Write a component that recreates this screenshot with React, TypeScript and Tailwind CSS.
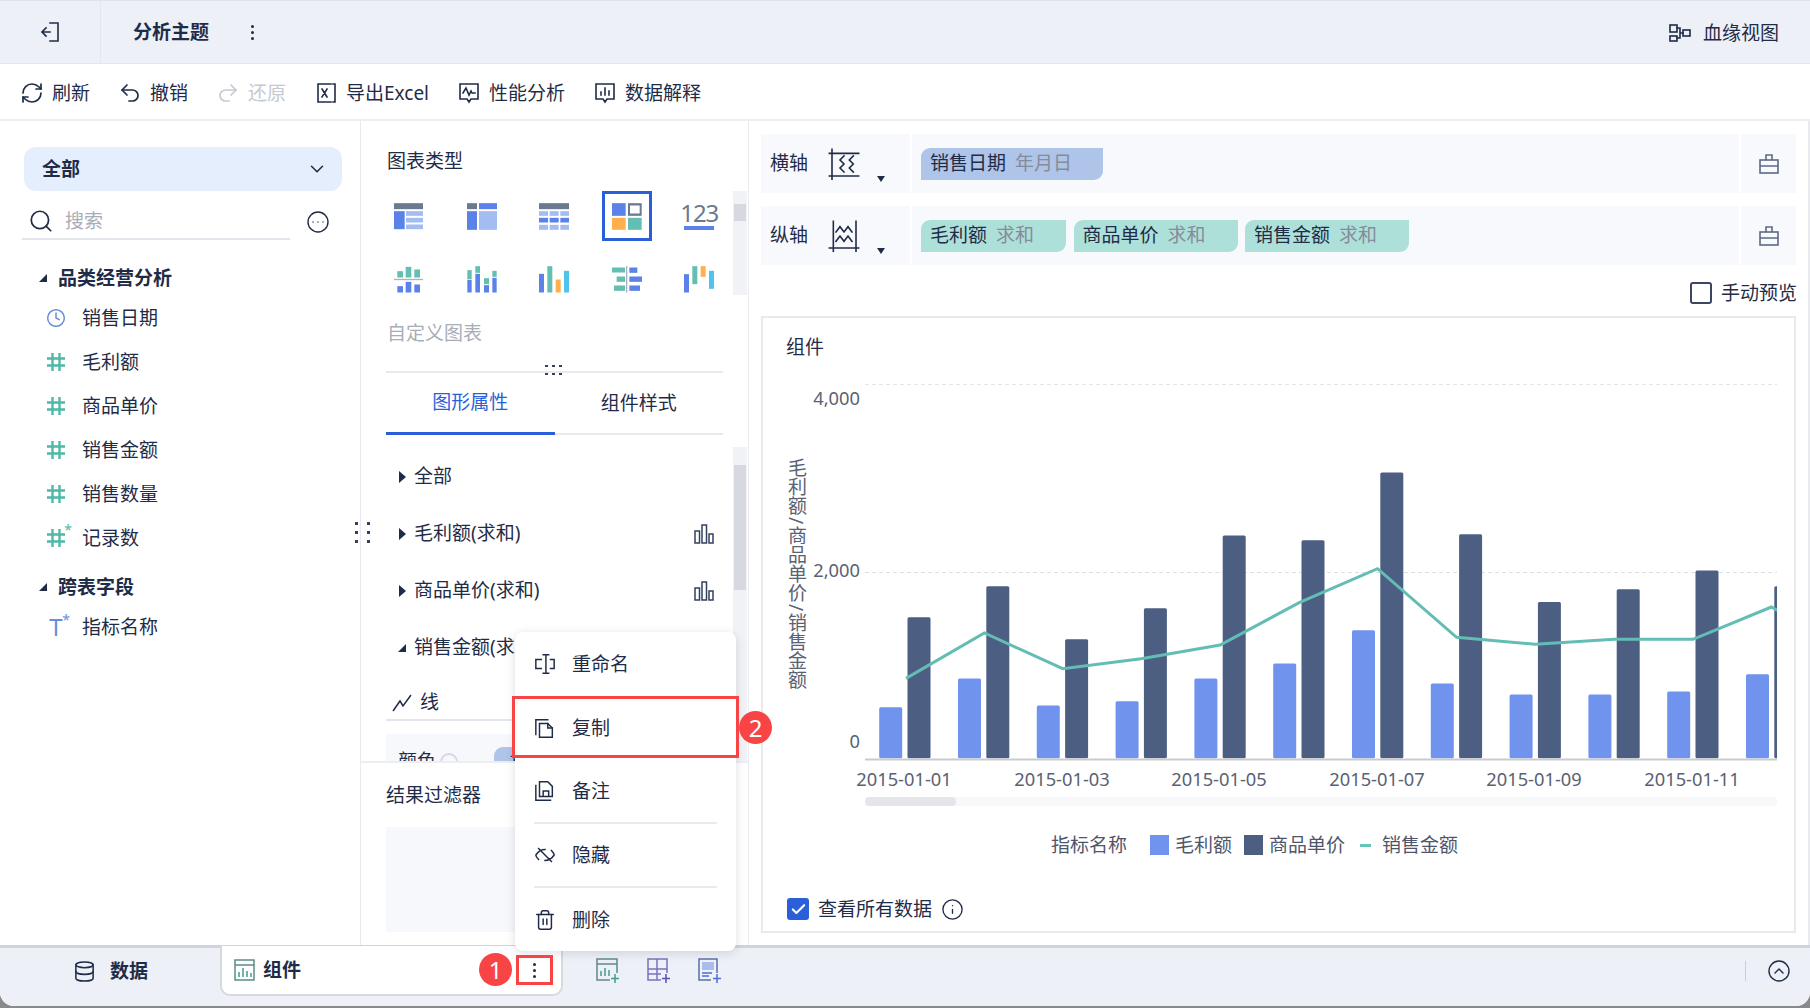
import { ChevronDown, CircleChevronUp, CircleEllipsis, Clock, Database, Info, Redo2, RefreshCw, Search, Trash2, Undo2, Check } from 'lucide-react'
import type { ReactNode } from 'react'

const INK = '#1f2c47'

type Bar = [number, number, number, number, string]

const G = '#6b7a90'
const B = '#5a82e8'
const L = '#a3bdf2'
const T = '#63bfb1'
const O = '#ffb04d'
const S = '#4fc3ee'

// coordinates are read from the reference at 3x
const chartIcons: { w: number; h: number; x: number; y: number; bars: Bar[] }[] = [
  {
    w: 30, h: 27, x: 45, y: 70,
    bars: [[45, 70, 132, 88, G], [45, 94, 77, 148, B], [81, 94, 132, 108, L], [81, 114, 132, 128, L], [81, 134, 132, 148, L]],
  },
  {
    w: 30, h: 27, x: 261, y: 68,
    bars: [[261, 68, 291, 86, G], [297, 68, 351, 86, B], [261, 92, 291, 148, B], [297, 92, 351, 148, L]],
  },
  {
    w: 30, h: 27, x: 477, y: 68,
    bars: [
      [477, 68, 567, 86, G],
      [477, 92, 504, 106, L], [509, 92, 536, 106, L], [541, 92, 567, 106, L],
      [477, 112, 504, 126, B], [509, 112, 536, 126, B], [541, 112, 567, 126, B],
      [477, 133, 504, 148, L], [509, 133, 536, 148, L], [541, 133, 567, 148, L],
    ],
  },
  {
    w: 30, h: 27, x: 697, y: 68,
    bars: [[697, 68, 738, 106, B], [745, 68, 786, 106, G], [751, 75, 780, 99, '#ffffff'], [697, 112, 738, 148, O], [745, 112, 786, 148, T]],
  },
]

const chartIconsRow2: { w: number; h: number; x: number; y: number; bars: Bar[] }[] = [
  {
    w: 30, h: 27, x: 45, y: 258,
    bars: [
      [55, 273, 72, 292, T], [80, 260, 97, 292, T], [106, 268, 123, 292, T], [45, 296, 132, 300, '#aab3c2'],
      [55, 318, 72, 337, B], [80, 305, 97, 337, B], [106, 313, 123, 337, B],
    ],
  },
  {
    w: 30, h: 27, x: 261, y: 258,
    bars: [
      [262, 270, 275, 297, T], [262, 299, 275, 337, B], [286, 258, 300, 278, T], [286, 281, 300, 337, B],
      [312, 294, 327, 312, T], [312, 315, 327, 337, B], [337, 272, 350, 290, T], [337, 293, 350, 337, B],
    ],
  },
  {
    w: 30, h: 27, x: 477, y: 258,
    bars: [[477, 281, 492, 337, B], [502, 258, 517, 337, T], [527, 298, 542, 337, O], [552, 272, 567, 337, S]],
  },
  {
    w: 30, h: 27, x: 696, y: 258,
    bars: [
      [738, 258, 742, 337, '#aab3c2'], [696, 262, 735, 277, T], [710, 289, 735, 305, T], [702, 316, 735, 332, T],
      [748, 262, 772, 278, B], [748, 289, 787, 305, B], [748, 316, 780, 332, B],
    ],
  },
  {
    w: 30, h: 27, x: 912, y: 258,
    bars: [[912, 282, 927, 337, B], [937, 258, 952, 312, T], [962, 258, 977, 290, O], [987, 272, 1002, 326, S]],
  },
]

function BarsIcon({ icon }: { icon: { w: number; h: number; x: number; y: number; bars: Bar[] } }) {
  return (
    <svg width={icon.w} height={icon.h} viewBox={`${icon.x} ${icon.y} 90 80`}>
      {icon.bars.map((b, i) => (
        <rect key={i} x={b[0]} y={b[1]} width={b[2] - b[0]} height={b[3] - b[1]} fill={b[4]} />
      ))}
    </svg>
  )
}

function Outline({ size = 22, children, color = INK, sw = 1.6 }: { size?: number; children: ReactNode; color?: string; sw?: number }) {
  return (
    <svg width={size} height={size} viewBox="0 0 24 24" fill="none" stroke={color} strokeWidth={sw} strokeLinecap="square">
      {children}
    </svg>
  )
}

function Caret({ dir }: { dir: 'right' | 'corner' }) {
  return (
    <svg width="9" height="12" viewBox="0 0 9 12" className="shrink-0" fill={INK}>
      {dir === 'right' ? <polygon points="1,0 8,6 1,12" /> : <polygon points="8,2 8,10 0,10" />}
    </svg>
  )
}

function Tool({ icon, label, muted }: { icon: ReactNode; label: string; muted?: boolean }) {
  return (
    <div className={`flex items-center gap-[8px] ${muted ? 'text-[#c5c9d1]' : ''}`}>
      {icon}
      <span>{label}</span>
    </div>
  )
}

const fields = [
  { label: '毛利额', star: false },
  { label: '商品单价', star: false },
  { label: '销售金额', star: false },
  { label: '销售数量', star: false },
  { label: '记录数', star: true },
]

function HashMark() {
  return (
    <svg width="20" height="20" viewBox="0 0 20 20" fill="none" stroke="#4fb8a8" strokeWidth="2.4">
      <path d="M6.500 1v18M13.500 1v18M1 6.500h18M1 13.500h18" />
    </svg>
  )
}

function FieldRow({ icon, label }: { icon: ReactNode; label: string }) {
  return (
    <div className="flex h-[44px] items-center">
      <div className="flex w-[82px] justify-end pr-[16px]">{icon}</div>
      <span>{label}</span>
    </div>
  )
}

function MiniBars() {
  return (
    <svg width="20" height="20" viewBox="0 0 20 20" fill="none" stroke="#33415f" strokeWidth="1.5">
      <rect x="1" y="7" width="4.5" height="12" />
      <rect x="8" y="1" width="4.5" height="18" />
      <rect x="15" y="10" width="4" height="9" />
    </svg>
  )
}

function PropRow({ open, label, bars }: { open?: boolean; label: string; bars?: boolean }) {
  return (
    <div className="flex h-[57px] items-center pl-[37px] pr-[34px]">
      <Caret dir={open ? 'corner' : 'right'} />
      <span className="ml-[7px] whitespace-nowrap">{label}</span>
      {bars && <div className="ml-auto"><MiniBars /></div>}
    </div>
  )
}

function Chip({ tone, name, sub, w }: { tone: string; name: string; sub: string; w: string }) {
  return (
    <div className={`flex h-[32px] items-center gap-[9px] rounded-tl-[9px] rounded-br-[9px] pl-[9px] ${tone} ${w}`}>
      <span>{name}</span>
      <span className="text-[#858b98]">{sub}</span>
    </div>
  )
}

function SuitcaseIcon() {
  return (
    <svg width="20" height="20" viewBox="0 0 20 20" fill="none" stroke="#5d6a82" strokeWidth="1.6">
      <rect x="1" y="6" width="18" height="13" />
      <path d="M7 6V1h6v5M1 12h18" />
    </svg>
  )
}

function AxisRow({ label, icon, children }: { label: string; icon: ReactNode; children: ReactNode }) {
  return (
    <div className="flex h-[59px] items-center bg-[#f8f9fd]">
      <div className="flex h-full w-[151px] items-center border-r-2 border-white pl-[9px]">
        <span className="w-[58px]">{label}</span>
        {icon}
        <svg width="8" height="8" viewBox="0 0 8 8" className="mt-[30px] ml-[17px]" fill={INK}><polygon points="0,1 8,1 4,7" /></svg>
      </div>
      <div className="flex flex-1 gap-[7.5px] pl-[9px]">{children}</div>
      <div className="flex h-full w-[57px] items-center justify-center border-l-2 border-white"><SuitcaseIcon /></div>
    </div>
  )
}

const light = [707, 678.3, 705.3, 701, 678.3, 663.3, 630, 683.3, 694.3, 694.3, 691.3, 674]
const dark = [617, 586, 639, 608, 535.3, 540, 472.3, 534, 601.7, 589, 570.3, 586]
const line: [number, number][] = [
  [218, 772], [335, 636], [452, 743], [569, 713], [687, 672], [805, 545], [922, 443], [1040, 649], [1158, 670], [1275, 655], [1393, 655], [1510, 558], [1519, 568],
]
const ticks = [
  ['2015-01-01', 904], ['2015-01-03', 1062], ['2015-01-05', 1219], ['2015-01-07', 1377], ['2015-01-09', 1534], ['2015-01-11', 1692],
] as const

function Chart() {
  const pts = line.map(([x, y]) => `${760 + x / 1.493},${420 + y / 3}`).join(' ')
  return (
    <svg width="1032" height="452" viewBox="763 358 1032 452" className="block">
      <defs>
        <clipPath id="plot"><rect x="865" y="358" width="912" height="402" /></clipPath>
      </defs>
      <line x1="865" x2="1777" y1="383.5" y2="383.5" stroke="#e4e6ea" strokeDasharray="4 3" />
      <line x1="865" x2="1777" y1="571.5" y2="571.5" stroke="#dcdfe4" strokeDasharray="4 3" />
      <g clipPath="url(#plot)">
        {light.map((top, i) => (
          <rect key={i} x={879.2 + 78.8 * i} y={top - 0.7} width={23} height={758 - top} rx={1.5} fill="#7093ee" />
        ))}
        {dark.map((top, i) => (
          <rect key={i} x={907.5 + 78.8 * i} y={top - 0.7} width={23} height={758 - top} rx={1.5} fill="#4c5f82" />
        ))}
        <polyline points={pts} fill="none" stroke="#64bdb4" strokeWidth="3" />
      </g>
      <line x1="865" x2="1777" y1="758.5" y2="758.5" stroke="#c9cbd0" strokeWidth="2" />
      <g fontSize="18.3" fill="#5a6172">
        <text x="860" y="404" textAnchor="end">4,000</text>
        <text x="860" y="576" textAnchor="end">2,000</text>
        <text x="860" y="747" textAnchor="end">0</text>
        {ticks.map(([t, x]) => (
          <text key={t} x={x} y="785" textAnchor="middle">{t}</text>
        ))}
        <text x="796" y="457" fontSize="19" style={{ writingMode: 'vertical-rl' }} textAnchor="start">
          毛利额<tspan dy="2">/</tspan><tspan dy="2">商品单价</tspan><tspan dy="2">/</tspan><tspan dy="2">销售金额</tspan>
        </text>
      </g>
      <rect x="865" y="796" width="912" height="9" rx="4" fill="#f7f8f9" />
      <rect x="865" y="796" width="91" height="9" rx="4" fill="#e4e6ea" />
    </svg>
  )
}

function MenuItem({ icon, label, divider }: { icon: ReactNode; label: string; divider?: boolean }) {
  return (
    <div className={`mx-[19px] flex h-[64px] shrink-0 items-center gap-[16px] ${divider ? 'border-b-2 border-[#e8eaef]' : ''}`}>
      {icon}
      <span>{label}</span>
    </div>
  )
}

function Badge({ n, className }: { n: number; className: string }) {
  return (
    <div className={`absolute flex h-[33px] w-[33px] items-center justify-center rounded-full bg-[#f84444] text-[24px] text-white ${className}`}>
      {n}
    </div>
  )
}

export default function App() {
  return (
    <div className="h-[1008px] w-[1810px] overflow-hidden bg-[#8a8a8a] font-['Noto_Sans','Noto_Sans_CJK_SC',sans-serif] text-[19px] text-[#1f2c47]">
      <div className="relative flex h-[1006px] flex-col overflow-hidden rounded-b-[14px] bg-white">
        {/* top bar */}
        <header className="flex h-[64px] shrink-0 items-center border-t border-[#dfe2e8] border-b border-b-[#e3e6ec] bg-[#edf0f6]">
          <div className="flex h-full w-[101px] items-center justify-center border-r border-[#e3e6ec]">
            <Outline size={24}>
              <path d="M12 3h8v18h-8M12 12H4M8 8l-4 4 4 4" />
            </Outline>
          </div>
          <span className="ml-[32px] font-bold">分析主题</span>
          <div className="ml-[42px] flex flex-col gap-[3px]">
            <i className="h-[3px] w-[3px] rounded-full bg-[#1f2c47]" />
            <i className="h-[3px] w-[3px] rounded-full bg-[#1f2c47]" />
            <i className="h-[3px] w-[3px] rounded-full bg-[#1f2c47]" />
          </div>
          <div className="ml-auto mr-[31px] flex items-center gap-[11px] pt-[2px]">
            <Outline size={24}>
              <rect x="2" y="4" width="7" height="7" />
              <rect x="2" y="15" width="7" height="5" />
              <rect x="15" y="9" width="7" height="6" />
              <path d="M9 7h3v10H9M12 12h3" />
            </Outline>
            <span>血缘视图</span>
          </div>
        </header>

        {/* toolbar */}
        <div className="flex h-[57px] shrink-0 items-center gap-[28px] border-b-2 border-[#eceef2] pl-[20px] pt-[3px]">
          <Tool icon={<RefreshCw size={24} strokeWidth={1.7} />} label="刷新" />
          <Tool icon={<Undo2 size={24} strokeWidth={1.7} />} label="撤销" />
          <Tool icon={<Redo2 size={24} strokeWidth={1.7} color="#c5c9d1" />} label="还原" muted />
          <Tool
            icon={
              <Outline size={24}>
                <path d="M17 3H4v18h13M19 3h2v18h-2M8 8l5 8M13 8l-5 8" />
              </Outline>
            }
            label="导出Excel"
          />
          <Tool
            icon={
              <Outline size={24}>
                <path d="M3 3h18v15h-7l-2 3-2-3H3zM6 12l3-5 3 7 2-4 1 2h3" />
              </Outline>
            }
            label="性能分析"
          />
          <Tool
            icon={
              <Outline size={24}>
                <path d="M3 3h18v15h-7l-2 3-2-3H3zM8 11v3M12 7v7M16 10v4" />
              </Outline>
            }
            label="数据解释"
          />
        </div>

        {/* main */}
        <div className="relative flex min-h-0 flex-1">
          {/* fields */}
          <aside className="w-[361px] shrink-0 border-r border-[#e8eaef]">
            <div className="mt-[26px] ml-[24px] flex h-[44px] w-[318px] items-center justify-between rounded-[12px] bg-[#e5eefc] pl-[18px] pr-[14px]">
              <span className="font-bold">全部</span>
              <ChevronDown size={22} strokeWidth={1.7} />
            </div>
            <div className="flex items-center">
              <div className="ml-[22px] flex h-[49px] w-[268px] items-center gap-[11px] border-b-2 border-[#e2e5ec] pl-[6px] pt-[13px]">
                <Search size={26} strokeWidth={1.6} />
                <span className="text-[#a9adb6]">搜索</span>
              </div>
              <CircleEllipsis className="ml-[16px] mt-[13px]" size={24} strokeWidth={1.4} />
            </div>
            <div className="mt-[20px] flex h-[36px] items-center pl-[39px] font-bold">
              <Caret dir="corner" />
              <span className="ml-[10px]">品类经营分析</span>
            </div>
            <FieldRow label="销售日期" icon={<Clock size={20} color="#6a8fd8" strokeWidth={1.8} />} />
            {fields.map((f) => (
              <FieldRow
                key={f.label}
                label={f.label}
                icon={
                  <span className="relative">
                    <HashMark />
                    {f.star && <span className="absolute -top-[5px] -right-[6px] text-[14px] leading-none text-[#4fb8a8]">*</span>}
                  </span>
                }
              />
            ))}
            <div className="mt-[9px] flex h-[36px] items-center pl-[39px] font-bold">
              <Caret dir="corner" />
              <span className="ml-[10px]">跨表字段</span>
            </div>
            <FieldRow
              label="指标名称"
              icon={
                <span className="relative block w-[20px] text-center text-[24px] leading-none text-[#6a8fd8]">
                  T
                  <span className="absolute -top-[2px] -right-[4px] text-[14px] leading-none">*</span>
                </span>
              }
            />
          </aside>

          {/* chart settings */}
          <section className="flex w-[388px] shrink-0 flex-col border-r border-[#e8eaef]">
            <div className="relative h-[642px] shrink-0 overflow-hidden border-b-2 border-[#eceef2]">
              <div className="pt-[28px] pb-[12px] pl-[26px] leading-[24px]">图表类型</div>
              <div className="grid grid-cols-[repeat(5,72.5px)] grid-rows-[63px_63px] pl-[12px]">
                {chartIcons.map((icon, i) => (
                  <div key={i} className="flex items-center justify-center">
                    {i === 3 ? (
                      <div className="mb-[1px] flex h-[50px] w-[50px] items-center justify-center border-[3px] border-[#2b5fd9]">
                        <BarsIcon icon={icon} />
                      </div>
                    ) : (
                      <BarsIcon icon={icon} />
                    )}
                  </div>
                ))}
                <div className="mb-[3px] flex flex-col items-center justify-center">
                  <span className="text-[24px] leading-[26px] tracking-[-1px] text-[#6b7a90]">123</span>
                  <span className="h-[4px] w-[30px] bg-[#5a82e8]" />
                </div>
                {chartIconsRow2.map((icon, i) => (
                  <div key={i} className="flex items-center justify-center">
                    <BarsIcon icon={icon} />
                  </div>
                ))}
              </div>
              <div className="mt-[10px] pl-[26px] leading-[24px] text-[#a9adb6]">自定义图表</div>
              <div className="mx-[25px] mt-[26px] border-t-2 border-[#e8eaef]" />
              <div className="mx-[25px] flex h-[62px] border-b-2 border-[#e8eaef]">
                <div className="-mb-[2px] flex w-[169px] items-center justify-center border-b-[3px] border-[#2b5fd9] text-[#2b5fd9]">图形属性</div>
                <div className="flex w-[169px] items-center justify-center">组件样式</div>
              </div>
              <div className="mt-[13px]">
                <PropRow label="全部" />
                <PropRow label="毛利额(求和)" bars />
                <PropRow label="商品单价(求和)" bars />
                <PropRow open label="销售金额(求和)" bars />
              </div>
              <div className="mx-[25px] mt-[7px] flex h-[38px] items-center gap-[8px] border-b-2 border-[#e2e5ec] pl-[6px] pt-[2px]">
                <svg width="20" height="20" viewBox="0 0 20 20" fill="none" stroke={INK} strokeWidth="1.5">
                  <path d="M1 19 8 9l3 5 8-11" />
                </svg>
                <span>线</span>
              </div>
              <div className="mx-[25px] mt-[13px] flex h-[60px] items-start bg-[#f7f8fc] pl-[12px] pt-[13px]">
                <span>颜色</span>
                <span className="ml-[4px] mt-[6px] h-[18px] w-[18px] rounded-full border-2 border-[#d5d8df]" />
                <span className="ml-[36px] h-[32px] w-[100px] rounded-tl-[9px] bg-[#aec4e8] pl-[16px]">指标名称</span>
              </div>
              <div className="absolute top-[244px] left-[184px] grid grid-cols-3 gap-x-[4px] gap-y-[6px]">
                {Array.from({ length: 6 }).map((_, i) => (
                  <i key={i} className="h-[2px] w-[3px] bg-[#33415f]" />
                ))}
              </div>
              <div className="absolute top-[70px] right-[1px] flex h-[104px] w-[14px] flex-col items-center bg-[#f1f2f5]">
                <span className="mt-[13px] h-[17px] w-[12px] bg-[#d6d9e0]" />
              </div>
              <div className="absolute top-[326px] right-[1px] h-[316px] w-[14px] bg-[#f1f2f5]">
                <span className="mt-[18px] ml-px block h-[125px] w-[12px] bg-[#d6d9e0]" />
              </div>
            </div>
            <div className="flex-1 pl-[25px] pr-[24px]">
              <div className="flex h-[64px] items-center pt-[1px]">结果过滤器</div>
              <div className="h-[105px] bg-[#f7f8fc]" />
            </div>
          </section>

          {/* preview */}
          <section className="flex min-w-0 flex-1 flex-col border-r-2 border-[#e8eaef] px-[12px] pt-[13px]">
            <AxisRow
              label="横轴"
              icon={
                <Outline size={32} sw={1.2}>
                  <path d="M1 4h22M1 21h22M3 1v23M12 6l-3 3 3 3-3 3 3 3M19 6l-3 3 3 3-3 3 3 3" />
                </Outline>
              }
            >
              <Chip tone="bg-[#aec4e8]" name="销售日期" sub="年月日" w="w-[182px]" />
            </AxisRow>
            <div className="mt-[13px]">
              <AxisRow
                label="纵轴"
                icon={
                  <Outline size={32} sw={1.2}>
                    <path d="M4 1v23M21 1v23M1 21h22M6 9l3-4 3 4 3-4 3 4M6 16l3-4 3 4 3-4 3 4" />
                  </Outline>
                }
              >
                <Chip tone="bg-[#aee0da]" name="毛利额" sub="求和" w="w-[145px]" />
                <Chip tone="bg-[#aee0da]" name="商品单价" sub="求和" w="w-[164px]" />
                <Chip tone="bg-[#aee0da]" name="销售金额" sub="求和" w="w-[164px]" />
              </AxisRow>
            </div>
            <div className="-mr-[1px] flex h-[51px] shrink-0 items-center justify-end gap-[9px] pt-[5px]">
              <span className="h-[22px] w-[22px] rounded-[3px] border-2 border-[#3b4660]" />
              <span>手动预览</span>
            </div>
            <div className="h-[617px] shrink-0 border-2 border-[#e8eaef]">
              <div className="pt-[17px] pl-[23px] leading-[24px]">组件</div>
              <Chart />
              <div className="flex h-[68px] items-center pl-[288px] text-[#4f566a]">
                <span>指标名称</span>
                <span className="ml-[23px] h-[20px] w-[19px] bg-[#7093ee]" />
                <span className="ml-[6px]">毛利额</span>
                <span className="ml-[12px] h-[20px] w-[19px] bg-[#4c5f82]" />
                <span className="ml-[6px]">商品单价</span>
                <span className="ml-[15px] h-[3px] w-[11px] bg-[#64c5b8]" />
                <span className="ml-[11px]">销售金额</span>
              </div>
              <div className="mt-[19px] flex h-[22px] items-center pl-[24px]">
                <span className="flex h-[22px] w-[22px] items-center justify-center rounded-[3px] bg-[#2b5fd9]">
                  <Check size={17} color="#fff" strokeWidth={3} />
                </span>
                <span className="ml-[9px]">查看所有数据</span>
                <Info className="ml-[9px]" size={23} strokeWidth={1.4} />
              </div>
            </div>
          </section>

          {/* grip between panels */}
          <div className="absolute top-[401px] left-[355px] grid grid-cols-2 gap-x-[9px] gap-y-[6px]">
            {Array.from({ length: 6 }).map((_, i) => (
              <i key={i} className="h-[3px] w-[3px] bg-[#33415f]" />
            ))}
          </div>
        </div>

        {/* bottom tabs */}
        <footer className="flex h-[61px] shrink-0 items-start border-t-[3px] border-[#cfd3dc] bg-[#edf0f6]">
          <div className="flex h-[46px] w-[220px] shrink-0 items-center pl-[73px] font-bold">
            <Database size={23} strokeWidth={1.6} />
            <span className="ml-[14px]">数据</span>
          </div>
          <div className="-mt-[2px] flex h-[50px] w-[343px] shrink-0 items-center rounded-b-[10px] border-x-2 border-b-2 border-[#d6d9e0] bg-white pl-[12px] font-bold">
            <svg width="21" height="22" viewBox="0 0 21 22" fill="none" stroke="#5f8a84" strokeWidth="1.5">
              <rect x="1" y="1" width="19" height="20" />
              <path d="M1 6h19" />
              <path d="M5 18v-5M9 18v-9M13 18v-6M17 18v-4" stroke="#3f9c8f" />
            </svg>
            <span className="ml-[8px]">组件</span>
            <div className="ml-[232px] flex flex-col gap-[3px]">
              <i className="h-[3px] w-[3px] rounded-full bg-[#1f2c47]" />
              <i className="h-[3px] w-[3px] rounded-full bg-[#1f2c47]" />
              <i className="h-[3px] w-[3px] rounded-full bg-[#1f2c47]" />
            </div>
          </div>
          <div className="ml-[33px] flex h-[46px] items-center gap-[27px]">
            <svg width="24" height="26" viewBox="0 0 24 26" fill="none" stroke="#5f8a84" strokeWidth="1.5">
              <path d="M21 15V1H1v21h13M1 6h20" />
              <path d="M5 18v-5M9 18v-8M13 18v-6" stroke="#3f9c8f" />
              <path d="M19 16v9M15 20.500h8" stroke="#3f9c8f" />
            </svg>
            <svg width="24" height="26" viewBox="0 0 24 26" fill="none" stroke="#7c6fc0" strokeWidth="1.5">
              <path d="M20 15V1H1v21h13M1 11h19M10 1v21M1 16h13" />
              <path d="M19 16v9M15 20.500h8" stroke="#5a4fb0" />
            </svg>
            <svg width="24" height="26" viewBox="0 0 24 26" fill="none" stroke="#5a6fa8" strokeWidth="1.5">
              <path d="M19 15V1H1v21h12" />
              <rect x="4" y="4" width="12" height="8" fill="#a9bdea" stroke="none" />
              <path d="M4 15h10M4 18h7" stroke="#4a6fd8" />
              <path d="M19 16v9M15 20.500h8" stroke="#4a6fd8" />
            </svg>
          </div>
          <div className="ml-auto flex h-[46px] items-center pr-[19px]">
            <span className="mr-[21px] h-[20px] w-px bg-[#c9cdd6]" />
            <CircleChevronUp size={24} strokeWidth={1.4} />
          </div>
        </footer>

        {/* context menu and annotations */}
        <div className="absolute top-[632px] left-[515px] flex h-[319px] w-[221px] flex-col rounded-[8px] bg-white shadow-[0_2px_10px_rgba(60,70,90,0.18)]">
          <MenuItem
            label="重命名"
            icon={
              <Outline>
                <path d="M8 7H2v10h6M18 7h4v10h-4M13 2v20M10 2h6M10 22h6" />
              </Outline>
            }
          />
          <MenuItem
            label="复制"
            icon={
              <Outline>
                <path d="M2 19V3h13M6 7h9l5 5v10H6z" />
                <path d="M15 7v5h5" />
              </Outline>
            }
          />
          <MenuItem
            divider
            label="备注"
            icon={
              <Outline>
                <path d="M2 6v16h16M6 2h9l5 5v11H6zM10 18v-6h6v6" />
              </Outline>
            }
          />
          <MenuItem
            divider
            label="隐藏"
            icon={
              <Outline>
                <path d="M19 7c2 2 3 3.500 3 5-2 3-5 6-10 6M5 17c-2-2-3-3.500-3-5 2-3 5-6 10-6M5 5l14 14" />
              </Outline>
            }
          />
          <MenuItem label="删除" icon={<Trash2 size={22} strokeWidth={1.6} />} />
        </div>
        <div className="absolute top-[696px] left-[512px] h-[62px] w-[227px] border-[3px] border-[#f84444]" />
        <Badge n={2} className="top-[711px] left-[739px]" />
        <div className="absolute top-[955px] left-[516px] h-[30px] w-[37px] border-[3px] border-[#f84444]" />
        <Badge n={1} className="top-[953px] left-[479px]" />
      </div>
    </div>
  )
}
